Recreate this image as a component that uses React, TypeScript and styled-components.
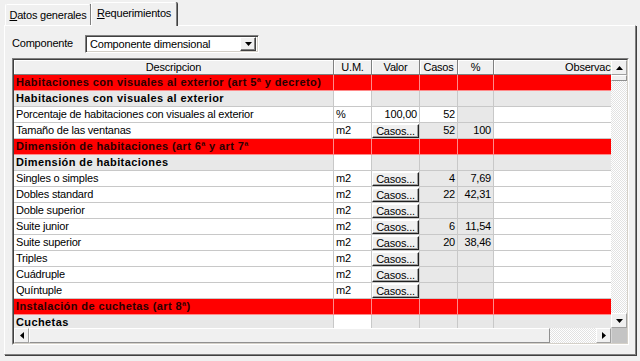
import React from 'react';
import styled, { createGlobalStyle } from 'styled-components';

const GlobalStyle = createGlobalStyle`
  html, body { margin: 0; padding: 0; background: #f0f0f0; }
  body {
    font-family: "Liberation Sans", Arial, sans-serif;
    font-size: 11px;
    color: #000;
    overflow: hidden;
  }
`;

const FACE = '#f0f0f0';
const GRAY_CELL = '#e8e8e8';
const RED = '#ff0000';
const COLUMNS = '320px 38px 48px 38px 36px 214px';

const Window = styled.div`
  width: 640px;
  height: 361px;
  box-sizing: border-box;
  padding: 2px 4px 0 4px;
`;

const TabStrip = styled.div`
  display: flex;
  align-items: flex-end;
  height: 23px;
  padding-left: 1px;
`;

const Tab = styled.div<{ $active?: boolean }>`
  box-sizing: border-box;
  position: relative;
  z-index: ${p => (p.$active ? 2 : 1)};
  width: 86px;
  height: ${p => (p.$active ? '24px' : '21px')};
  margin-bottom: ${p => (p.$active ? '-1px' : '0')};
  background: ${FACE};
  border-top: 1px solid #fff;
  border-left: 1px solid #fff;
  border-right: 1px solid #808080;
  box-shadow: 1px 0 0 #404040;
  border-top-left-radius: 2px;
  border-top-right-radius: 2px;
  display: flex;
  align-items: center;
  justify-content: center;
  padding-bottom: ${p => (p.$active ? '4px' : '1px')};
  letter-spacing: -0.2px;
  white-space: nowrap;
`;

const Panel = styled.div`
  box-sizing: border-box;
  width: 632px;
  height: 330px;
  border-top: 1px solid #fff;
  border-left: 1px solid #fff;
  border-right: 1px solid #808080;
  border-bottom: 1px solid #808080;
  box-shadow: 1px 1px 0 #404040;
  padding: 9px 0 0 7px;
`;

const FieldRow = styled.div`
  display: flex;
  align-items: center;
  height: 18px;
`;

const Label = styled.span`
  width: 73px;
  letter-spacing: -0.2px;
  margin-top: -3px;
`;

const Select = styled.div`
  box-sizing: border-box;
  width: 174px;
  height: 18px;
  border: 1px solid;
  border-color: #808080 #fff #fff #808080;
  box-shadow: inset 1px 1px #404040, inset -1px -1px #d4d0c8;
  background: #fff;
  display: flex;
  align-items: center;
  padding: 2px 2px 2px 4px;
`;

const SelectText = styled.span`
  flex: 1;
  letter-spacing: -0.2px;
  white-space: nowrap;
`;

const DropButton = styled.div`
  box-sizing: border-box;
  width: 16px;
  height: 14px;
  background: ${FACE};
  border: 1px solid;
  border-color: #fff #404040 #404040 #fff;
  box-shadow: inset -1px -1px #808080;
  display: flex;
  align-items: center;
  justify-content: center;
`;

const GridFrame = styled.div`
  box-sizing: border-box;
  width: 617px;
  height: 287px;
  margin-top: 5px;
  border: 1px solid;
  border-color: #808080 #fff #fff #808080;
`;

const GridInner = styled.div`
  box-sizing: border-box;
  height: 100%;
  border: 1px solid;
  border-color: #404040 #d4d0c8 #d4d0c8 #404040;
  display: grid;
  grid-template-columns: 1fr 16px;
  grid-template-rows: 1fr 15px;
  background: #fff;
  overflow: hidden;
`;

const DataArea = styled.div`
  overflow: hidden;
  background: #fff;
`;

const HeaderRow = styled.div`
  display: grid;
  grid-template-columns: ${COLUMNS};
  height: 15px;
`;

const HeaderCell = styled.div`
  box-sizing: border-box;
  background: ${FACE};
  border-right: 1px solid #808080;
  border-bottom: 1px solid #808080;
  box-shadow: inset 1px 1px #fff;
  text-align: center;
  line-height: 14px;
  letter-spacing: -0.2px;
  white-space: nowrap;
  overflow: hidden;
`;

const Row = styled.div`
  display: grid;
  grid-template-columns: ${COLUMNS};
  height: 16px;
`;

const Cell = styled.div<{ $bg: string; $right?: boolean; $bold?: boolean; $line?: string }>`
  box-sizing: border-box;
  height: 16px;
  background: ${p => p.$bg};
  border-right: 1px solid ${p => p.$line || '#c8c8c8'};
  border-bottom: 1px solid ${p => p.$line || '#c8c8c8'};
  padding: 0 2px;
  line-height: 15px;
  text-align: ${p => (p.$right ? 'right' : 'left')};
  font-weight: ${p => (p.$bold ? 'bold' : 'normal')};
  letter-spacing: ${p => (p.$bold ? '0.4px' : '-0.2px')};
  color: ${p => (p.$bg === RED ? '#2a0000' : '#000')};
  white-space: nowrap;
  overflow: hidden;
`;

const ButtonCell = styled.div`
  box-sizing: border-box;
  height: 16px;
  border-right: 1px solid #c8c8c8;
  border-bottom: 1px solid #c8c8c8;
  padding: 1px 0 0 0;
  background: #fff;
`;

const CasosButton = styled.div`
  box-sizing: border-box;
  height: 14px;
  background: ${FACE};
  border: 1px solid;
  border-color: #fff #202020 #202020 #fff;
  box-shadow: inset -1px -1px #a0a0a0;
  text-align: center;
  line-height: 12px;
  letter-spacing: -0.2px;
`;

const VScroll = styled.div`
  display: flex;
  flex-direction: column;
`;

const HScroll = styled.div`
  display: flex;
  border-top: 0;
`;

const ScrollButton = styled.div`
  box-sizing: border-box;
  flex: 0 0 15px;
  width: ${p => 'auto'};
  background: ${FACE};
  border: 1px solid;
  border-color: #fff #a0a0a0 #a0a0a0 #fff;
  display: flex;
  align-items: center;
  justify-content: center;
`;

const Thumb = styled.div<{ $size: number }>`
  box-sizing: border-box;
  flex: 0 0 ${p => p.$size}px;
  background: ${FACE};
  border: 1px solid;
  border-color: #fff #909090 #909090 #fff;
`;

const Track = styled.div`
  flex: 1;
  background: repeating-conic-gradient(#fff 0% 25%, #e2e2e2 0% 50%) 0 0 / 2px 2px;
`;

const Corner = styled.div`
  background: #c4c4c4;
  border-left: 1px solid #d8d8d8;
`;

type Arrow = 'up' | 'down' | 'left' | 'right';

const ArrowIcon = ({ dir }: { dir: Arrow }) => {
  const pts = {
    up: '0,4 7,4 3.5,0',
    down: '0,0 7,0 3.5,4',
    left: '4,0 4,7 0,3.5',
    right: '0,0 0,7 4,3.5',
  }[dir];
  const vertical = dir === 'up' || dir === 'down';
  return (
    <svg width={vertical ? 7 : 4} height={vertical ? 4 : 7} viewBox={vertical ? '0 0 7 4' : '0 0 4 7'}>
      <polygon points={pts} fill="#000" />
    </svg>
  );
};

type Kind = 'section' | 'group' | 'item';

interface GridRow {
  kind: Kind;
  desc: string;
  um?: string;
  valor?: string;
  button?: boolean;
  casos?: string;
  pct?: string;
}

const rows: GridRow[] = [
  { kind: 'section', desc: 'Habitaciones con visuales al exterior (art 5ª y decreto)' },
  { kind: 'group', desc: 'Habitaciones con visuales al exterior' },
  { kind: 'item', desc: 'Porcentaje de habitaciones con visuales al exterior', um: '%', valor: '100,00', casos: '52' },
  { kind: 'item', desc: 'Tamaño de las ventanas', um: 'm2', button: true, casos: '52', pct: '100' },
  { kind: 'section', desc: 'Dimensión de habitaciones (art 6ª y art 7ª' },
  { kind: 'group', desc: 'Dimensión de habitaciones' },
  { kind: 'item', desc: 'Singles o simples', um: 'm2', button: true, casos: '4', pct: '7,69' },
  { kind: 'item', desc: 'Dobles standard', um: 'm2', button: true, casos: '22', pct: '42,31' },
  { kind: 'item', desc: 'Doble superior', um: 'm2', button: true },
  { kind: 'item', desc: 'Suite junior', um: 'm2', button: true, casos: '6', pct: '11,54' },
  { kind: 'item', desc: 'Suite superior', um: 'm2', button: true, casos: '20', pct: '38,46' },
  { kind: 'item', desc: 'Triples', um: 'm2', button: true },
  { kind: 'item', desc: 'Cuádruple', um: 'm2', button: true },
  { kind: 'item', desc: 'Quíntuple', um: 'm2', button: true },
  { kind: 'section', desc: 'Instalación de cuchetas (art 8ª)' },
  { kind: 'group', desc: 'Cuchetas' },
];

function GridLine({ row }: { row: GridRow }) {
  if (row.kind === 'section') {
    const line = '#ff8a8a';
    return (
      <Row>
        <Cell $bg={RED} $bold $line={line}>{row.desc}</Cell>
        <Cell $bg={RED} $line={line} />
        <Cell $bg={RED} $line={line} />
        <Cell $bg={RED} $line={line} />
        <Cell $bg={RED} $line={line} />
        <Cell $bg={RED} $line={line} />
      </Row>
    );
  }
  if (row.kind === 'group') {
    return (
      <Row>
        <Cell $bg={GRAY_CELL} $bold>{row.desc}</Cell>
        <Cell $bg="#fff" />
        <Cell $bg={GRAY_CELL} />
        <Cell $bg={GRAY_CELL} />
        <Cell $bg={GRAY_CELL} />
        <Cell $bg={GRAY_CELL} />
      </Row>
    );
  }
  return (
    <Row>
      <Cell $bg="#fff">{row.desc}</Cell>
      <Cell $bg="#fff">{row.um}</Cell>
      {row.button ? (
        <ButtonCell>
          <CasosButton>Casos...</CasosButton>
        </ButtonCell>
      ) : (
        <Cell $bg="#fff" $right>{row.valor}</Cell>
      )}
      <Cell $bg={row.button ? GRAY_CELL : '#fff'} $right>{row.casos}</Cell>
      <Cell $bg={GRAY_CELL} $right>{row.pct}</Cell>
      <Cell $bg="#fff" />
    </Row>
  );
}

export default function App() {
  return (
    <>
      <GlobalStyle />
      <Window>
        <TabStrip>
          <Tab><span><u>D</u>atos generales</span></Tab>
          <Tab $active><span><u>R</u>equerimientos</span></Tab>
        </TabStrip>
        <Panel>
          <FieldRow>
            <Label>Componente</Label>
            <Select>
              <SelectText>Componente dimensional</SelectText>
              <DropButton><ArrowIcon dir="down" /></DropButton>
            </Select>
          </FieldRow>
          <GridFrame>
            <GridInner>
              <DataArea>
                <HeaderRow>
                  <HeaderCell>Descripcion</HeaderCell>
                  <HeaderCell>U.M.</HeaderCell>
                  <HeaderCell>Valor</HeaderCell>
                  <HeaderCell>Casos</HeaderCell>
                  <HeaderCell>%</HeaderCell>
                  <HeaderCell>Observaciones</HeaderCell>
                </HeaderRow>
                {rows.map((r, i) => (
                  <GridLine key={i} row={r} />
                ))}
              </DataArea>
              <VScroll>
                <ScrollButton><ArrowIcon dir="up" /></ScrollButton>
                <Thumb $size={6} />
                <Track />
                <ScrollButton><ArrowIcon dir="down" /></ScrollButton>
              </VScroll>
              <HScroll>
                <ScrollButton><ArrowIcon dir="left" /></ScrollButton>
                <Thumb $size={521} />
                <Track />
                <ScrollButton><ArrowIcon dir="right" /></ScrollButton>
              </HScroll>
              <Corner />
            </GridInner>
          </GridFrame>
        </Panel>
      </Window>
    </>
  );
}
